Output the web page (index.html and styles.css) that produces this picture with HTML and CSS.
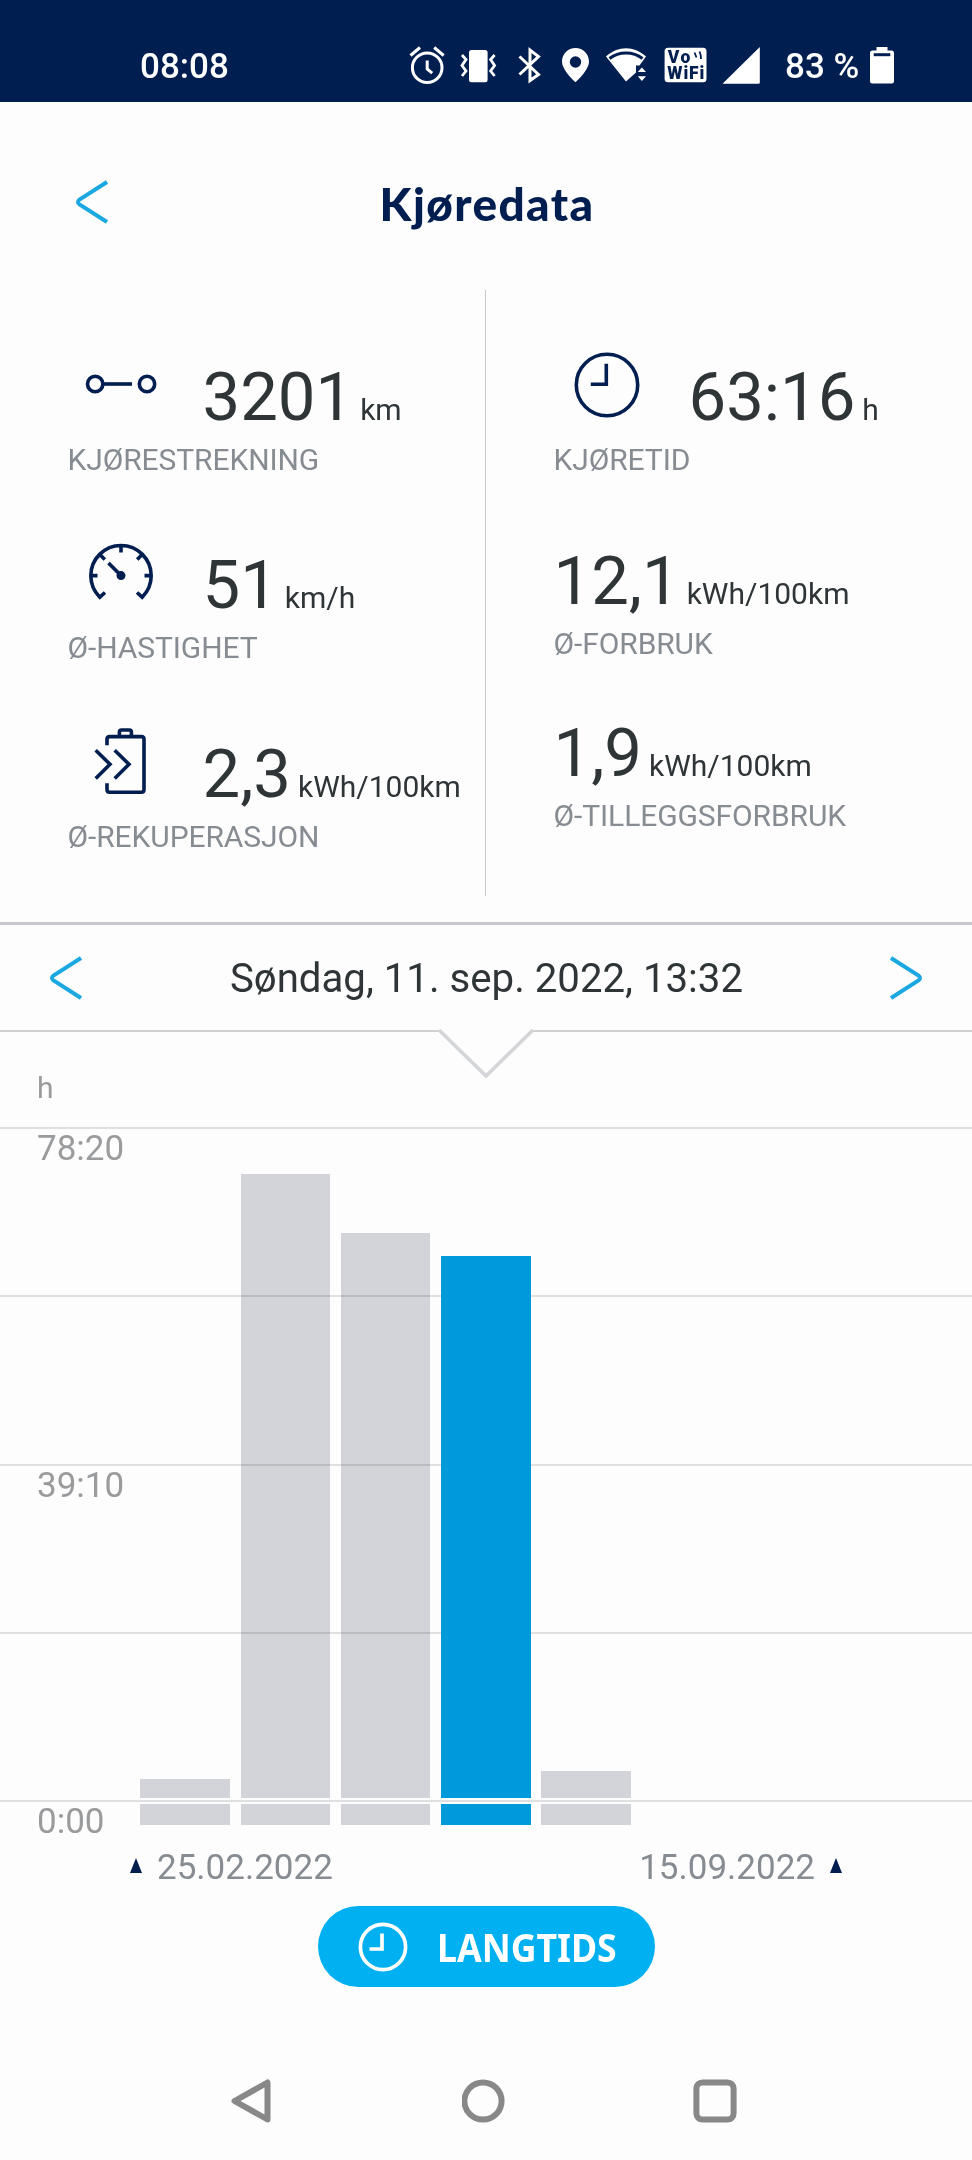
FILE: index.html
```html
<!DOCTYPE html>
<html lang="no">
<head>
    <meta charset="UTF-8">
    <meta name="viewport" content="width=device-width, initial-scale=1.0">
    <title>Kjøredata</title>
    <link rel="stylesheet" href="styles.css">
</head>
<body>
    <div class="statusbar">
        <span class="time">08:08</span>
        <svg class="status-icons" width="360" height="44" viewBox="404 44 360 44">
            <!-- alarm -->
            <g fill="none" stroke="#fff" stroke-width="3">
                <circle cx="427.2" cy="67.7" r="14.8"/>
                <path d="M427.2 60.5v8.5l5 4.2M410.5 55.5l9.5-8M443.7 55.5l-9.5-8" />
            </g>
            <!-- vibrate -->
            <rect x="469" y="50" width="18.6" height="32.3" rx="2.5" fill="#fff"/>
            <path d="M462 55l4 4.5-4 6 4 5.5-4 5M494.6 55l-4 4.5 4 6-4 5.5 4 5" fill="none" stroke="#fff" stroke-width="2.8"/>
            <!-- bluetooth -->
            <path d="M519.5 56.5L538.5 74.5L530 80.5V50L538.5 56.5L519.5 74.5" fill="none" stroke="#fff" stroke-width="3"/>
            <!-- location -->
            <path fill="#fff" fill-rule="evenodd" d="M575.5 48c-7.6 0-13.5 6-13.5 13.6 0 9 13.5 20.7 13.5 20.7s13.5-11.7 13.5-20.7c0-7.6-5.9-13.6-13.5-13.6zm0 8.3a5.7 5.7 0 1 1 0 11.4a5.7 5.7 0 1 1 0-11.4z"/>
            <!-- wifi -->
            <path fill="#fff" d="M606 56.5C618 45.5 634 45.5 646 56.5L639.5 65.5H636V72.5L626 81.5Z"/>
            <path fill="none" stroke="#001e50" stroke-width="3" d="M609.5 58.5C619 51 633 51 642.5 58.5"/>
            <path fill="#fff" d="M637.8 72l4.1-4.6 4.1 4.6zM637.8 76.3l4.1 4.6 4.1-4.6z"/>
            <!-- vowifi -->
            <rect x="664.6" y="47.7" width="41.9" height="34.5" rx="3.5" fill="#fff"/>
            <text class="vowifi" x="667.8" y="62.8" textLength="22.5">Vo</text>
            <text class="vowifi" x="667.3" y="79" textLength="37">WiFi</text>
            <path d="M694.5 52.5l2 5M699.5 51.5q1.8 4 1.5 7.5" fill="none" stroke="#001e50" stroke-width="1.8"/>
            <!-- signal -->
            <path fill="#fff" d="M759.8 47v35.5a1.3 1.3 0 0 1-1.3 1.3H722.5z"/>
        </svg>
        <span class="battery-text">83 %</span>
        <svg class="battery" width="26" height="38" viewBox="0 0 26 38">
            <path fill="#fff" d="M7.5 1h11v3.5h4a2.5 2.5 0 0 1 2.5 2.5v28a2.5 2.5 0 0 1-2.5 2.5h-19a2.5 2.5 0 0 1-2.5-2.5v-28a2.5 2.5 0 0 1 2.5-2.5h4z"/>
            <path d="M4.7 8.7h16.6" stroke="#001e50" stroke-width="3"/>
        </svg>
    </div>

    <header class="header">
        <svg class="chevron header-back" viewBox="0 0 34 46"><path d="M31 3L3.500 20.500Q.5 23 3.500 25.500L31 43"/></svg>
        <h1>Kjøredata</h1>
    </header>

    <section class="stats">
        <div class="stats-col">
            <div class="stat">
                <div class="stat-row">
                    <svg class="icon" viewBox="0 0 80 80">
                        <circle cx="14.2" cy="39" r="7.7"/>
                        <circle cx="66" cy="39" r="7.7"/>
                        <path d="M22 39h29"/>
                    </svg>
                    <span class="value">3201</span><span class="unit">km</span>
                </div>
                <div class="label">KJØRESTREKNING</div>
            </div>
            <div class="stat">
                <div class="stat-row">
                    <svg class="icon" viewBox="0 0 80 80">
                        <path d="M24 59.500L18.800 64.200A30.200 30.200 0 1 1 61.200 64.200L56 59.500M40 13v6.500M9.500 42.600h7M70.500 42.600h-7M18.800 21.400l5 5M61.200 21.400l-5 5M27.500 30L40 42.600"/>
                        <circle class="dot" cx="40" cy="42.6" r="4.5"/>
                    </svg>
                    <span class="value">51</span><span class="unit">km/h</span>
                </div>
                <div class="label">Ø-HASTIGHET</div>
            </div>
            <div class="stat">
                <div class="stat-row">
                    <svg class="icon" viewBox="0 0 80 80">
                        <path d="M26 23.300v-6q0-2.700 2.700-2.700H60.300q2.700 0 2.700 2.700V67.600q0 2.700-2.700 2.700H28.700q-2.700 0-2.700-2.700v-6.300M38.400 14.600V10q0-2 2-2h8q2 0 2 2v4.600M14.700 28.300L29 42.300L14.700 56.600M33.700 28.300L48 42.300L33.700 56.600"/>
                    </svg>
                    <span class="value">2,3</span><span class="unit">kWh/100km</span>
                </div>
                <div class="label">Ø-REKUPERASJON</div>
            </div>
        </div>
        <div class="stats-col stats-right">
            <div class="stat">
                <div class="stat-row">
                    <svg class="icon" viewBox="0 0 80 80">
                        <circle cx="40" cy="40" r="30.7"/>
                        <path d="M39.300 18.800v20.500H23.800"/>
                    </svg>
                    <span class="value">63:16</span><span class="unit">h</span>
                </div>
                <div class="label">KJØRETID</div>
            </div>
            <div class="stat">
                <div class="stat-row">
                    <span class="value">12,1</span><span class="unit">kWh/100km</span>
                </div>
                <div class="label">Ø-FORBRUK</div>
            </div>
            <div class="stat">
                <div class="stat-row">
                    <span class="value">1,9</span><span class="unit">kWh/100km</span>
                </div>
                <div class="label">Ø-TILLEGGSFORBRUK</div>
            </div>
        </div>
    </section>

    <section class="datebar">
        <svg class="chevron" viewBox="0 0 34 46"><path d="M32 3L4.500 20.500Q1.500 23 4.500 25.500L32 43"/></svg>
        <span class="date">Søndag, 11. sep. 2022, 13:32</span>
        <svg class="chevron" viewBox="0 0 34 46"><path d="M2 3L29.500 20.500Q32.500 23 29.500 25.500L2 43"/></svg>
        <svg class="notch" viewBox="0 0 98 50">
            <path class="notch-fill" d="M3 0L49 47L95 0Z"/>
            <path class="notch-line" d="M2 1L49 47L96 1"/>
        </svg>
    </section>

    <section class="chart">
        <div class="chart-unit">h</div>
        <div class="plot">
            <div class="lines">
                <div class="line">78:20</div>
                <div class="line"></div>
                <div class="line">39:10</div>
                <div class="line"></div>
                <div class="line">0:00</div>
            </div>
            <div class="bars">
                <div class="bar"><div class="bar-top" style="height: 19px"></div><div class="bar-foot"></div></div>
                <div class="bar"><div class="bar-top" style="height: 624px"></div><div class="bar-foot"></div></div>
                <div class="bar"><div class="bar-top" style="height: 565px"></div><div class="bar-foot"></div></div>
                <div class="bar active"><div class="bar-top" style="height: 542px"></div><div class="bar-foot"></div></div>
                <div class="bar"><div class="bar-top" style="height: 27px"></div><div class="bar-foot"></div></div>
            </div>
        </div>
        <div class="range">
            <svg class="marker" viewBox="0 0 12 15"><path d="M6 0L12 15H0Z"/></svg>
            <span>25.02.2022</span>
            <span class="range-end">15.09.2022</span>
            <svg class="marker" viewBox="0 0 12 15"><path d="M6 0L12 15H0Z"/></svg>
        </div>
    </section>

    <button class="btn">
        <svg width="50" height="50" viewBox="0 0 50 50">
            <circle cx="25" cy="25" r="22.6"/>
            <path d="M24 11.500v15.500H11.500"/>
        </svg>
        <span>LANGTIDS</span>
    </button>

    <nav class="navbar">
        <svg width="44" height="46" viewBox="0 0 44 46"><path d="M37.500 4.500V41.500L4.500 23Z"/></svg>
        <svg width="44" height="46" viewBox="0 0 44 46"><circle cx="21" cy="23" r="18.6"/></svg>
        <svg width="44" height="46" viewBox="0 0 44 46"><rect x="3.4" y="4.4" width="37.2" height="37.2" rx="6"/></svg>
    </nav>
</body>
</html>
```
FILE: styles.css
```css
*{
    box-sizing: border-box;
}
body{
    margin: 0;
    width: 972px;
    height: 2160px;
    overflow: hidden;
    background-color: #fdfdfe;
    font-family: Roboto, sans-serif;
    color: #2f3437;
    display: flex;
    flex-direction: column;
}
svg{
    display: block;
    flex: none;
}
.statusbar{
    height: 102px;
    padding: 31px 0 0 140px;
    display: flex;
    align-items: center;
    flex: none;
    background-color: #001e50;
    color: #fff;
    font-size: 35px;
    font-weight: 500;
}
.time{
    width: 264px;
}
.status-icons{
    margin-bottom: 1px;
}
.vowifi{
    font-size: 17.500px;
    font-weight: 900;
    fill: #001e50;
}
.battery-text{
    width: 84px;
    margin-left: 21px;
    white-space: nowrap;
}
.battery{
    margin-bottom: 3px;
}
.header{
    height: 188px;
    flex: none;
    display: grid;
    grid-template-columns: 76px 34px 1fr 108px;
    align-items: start;
}
.header-back{
    grid-column: 2;
    margin-top: 77px;
}
.header h1{
    margin: 70px 0 0;
    font-family: Lato, "Noto Sans", sans-serif;
    font-size: 46px;
    line-height: 64px;
    font-weight: 900;
    letter-spacing: 1.400px;
    text-align: center;
    color: #001e50;
}
.chevron{
    width: 34px;
    height: 46px;
    fill: none;
    stroke: #1ba8e0;
    stroke-width: 4;
}
.stats{
    height: 632px;
    flex: none;
    display: grid;
    grid-template-columns: 485px 1fr;
}
.stats-col{
    height: 606px;
    padding: 67px 0 0 67.500px;
    display: flex;
    flex-direction: column;
    gap: 67.300px;
}
.stats-right{
    border-left: 1px solid #c6c9cd;
    gap: 63px;
}
.stats-right .stat:last-child{
    margin-top: -12.500px;
}
.stat-row{
    height: 80px;
    display: flex;
    align-items: baseline;
    white-space: nowrap;
}
.icon{
    width: 80px;
    height: 80px;
    margin: -12px 41.500px 0 13.500px;
    align-self: flex-start;
    fill: none;
    stroke: #001e50;
    stroke-width: 3.600;
}
.icon .dot{
    fill: #001e50;
    stroke: none;
}
.value{
    font-size: 67px;
    line-height: 80px;
}
.unit{
    margin-left: 7px;
    font-size: 30px;
}
.label{
    margin-top: 5px;
    font-size: 30px;
    line-height: 36px;
    letter-spacing: -.1px;
    color: #868c92;
}
.datebar{
    position: relative;
    height: 110px;
    flex: none;
    padding: 0 49px;
    display: flex;
    align-items: center;
    justify-content: space-between;
    border-top: 3px solid #c5c7ca;
    border-bottom: 2px solid #cfd1d3;
}
.date{
    padding: 3px 0 0 1px;
    font-size: 40.200px;
    line-height: 48px;
}
.notch{
    position: absolute;
    left: 437px;
    top: 104px;
    width: 98px;
    height: 50px;
}
.notch-fill{
    fill: #fdfdfe;
}
.notch-line{
    fill: none;
    stroke: #d3d5d8;
    stroke-width: 3.600;
}
.chart{
    height: 873px;
    flex: none;
    color: #999b9d;
}
.chart-unit{
    height: 95px;
    padding: 38px 0 0 37px;
    font-size: 30px;
    line-height: 36px;
}
.plot{
    display: grid;
    height: 719px;
}
.lines,
.bars{
    grid-area: 1 / 1;
}
.line{
    height: 168.250px;
    padding-left: 37px;
    border-top: 2px solid #dfe0e1;
    font-size: 35px;
    line-height: 40px;
}
.line:last-child{
    height: 46px;
}
.bars{
    height: 698px;
    padding-left: 140.300px;
    display: flex;
    align-items: flex-end;
    gap: 10.700px;
}
.bar{
    width: 89.600px;
}
/* grid lines stay visible through the grey bars */
.bar-top,
.bar-foot{
    background-color: #d5d6da;
    mix-blend-mode: multiply;
}
.bar-foot{
    height: 21px;
    margin-top: 6px;
}
.active div{
    background-color: #0099da;
    mix-blend-mode: normal;
}
.range{
    display: flex;
    align-items: center;
    padding: 1px 130px 0;
    font-size: 35px;
    line-height: 42px;
    color: #868c92;
}
.range span{
    margin: 0 15px;
}
.range .range-end{
    margin-left: auto;
}
.marker{
    width: 12px;
    height: 15px;
    margin-bottom: 6px;
    fill: #001e50;
}
.btn{
    width: 337px;
    height: 81px;
    margin: 1px 0 0 317.500px;
    padding: 0 0 0 40px;
    flex: none;
    display: flex;
    align-items: center;
    gap: 29px;
    border: none;
    border-radius: 41px;
    background-color: #00b0f0;
    color: #fff;
    font-family: "Noto Sans", sans-serif;
    font-size: 39px;
    font-weight: 700;
}
.btn svg{
    fill: none;
    stroke: #fff;
    stroke-width: 3.700;
}
.btn span{
    transform: scaleX(.915);
    transform-origin: left;
}
.navbar{
    height: 173px;
    padding: 91px 235px 0 230px;
    display: flex;
    justify-content: space-between;
    flex: none;
}
.navbar svg{
    fill: none;
    stroke: #888;
    stroke-width: 6;
    stroke-linejoin: round;
}
```
